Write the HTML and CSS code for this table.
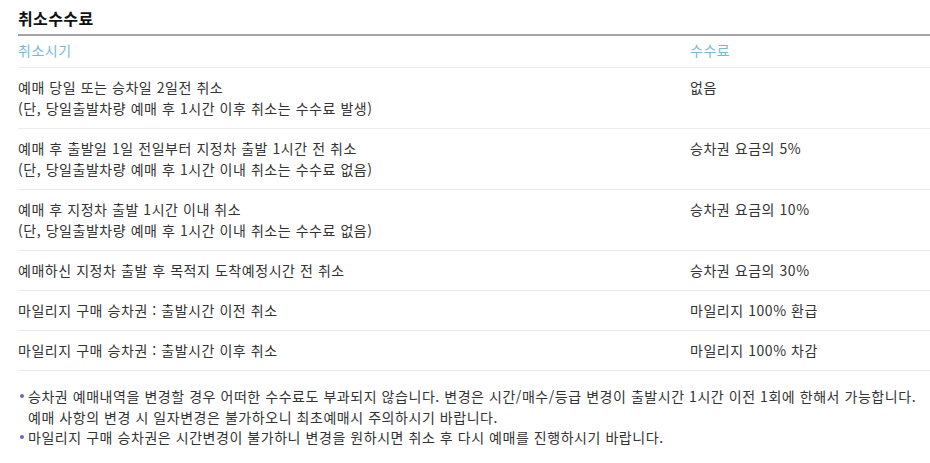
FILE: index.html
```html
<!DOCTYPE html>
<html lang="ko">
<head>
<meta charset="utf-8">
<link rel="stylesheet" href="styles.css">
</head>
<body>
<div class="wrap">
  <h2 class="title">취소수수료</h2>
  <div class="table">
    <div class="row head">
      <div class="c1">취소시기</div>
      <div class="c2">수수료</div>
    </div>
    <div class="row">
      <div class="c1">예매 당일 또는 승차일 2일전 취소<br>(단, 당일출발차량 예매 후 1시간 이후 취소는 수수료 발생)</div>
      <div class="c2">없음</div>
    </div>
    <div class="row">
      <div class="c1">예매 후 출발일 1일 전일부터 지정차 출발 1시간 전 취소<br>(단, 당일출발차량 예매 후 1시간 이내 취소는 수수료 없음)</div>
      <div class="c2">승차권 요금의 5%</div>
    </div>
    <div class="row">
      <div class="c1">예매 후 지정차 출발 1시간 이내 취소<br>(단, 당일출발차량 예매 후 1시간 이내 취소는 수수료 없음)</div>
      <div class="c2">승차권 요금의 10%</div>
    </div>
    <div class="row">
      <div class="c1">예매하신 지정차 출발 후 목적지 도착예정시간 전 취소</div>
      <div class="c2">승차권 요금의 30%</div>
    </div>
    <div class="row">
      <div class="c1">마일리지 구매 승차권 : 출발시간 이전 취소</div>
      <div class="c2">마일리지 100% 환급</div>
    </div>
    <div class="row">
      <div class="c1">마일리지 구매 승차권 : 출발시간 이후 취소</div>
      <div class="c2">마일리지 100% 차감</div>
    </div>
  </div>
  <ul class="notes">
    <li>승차권 예매내역을 변경할 경우 어떠한 수수료도 부과되지 않습니다. 변경은 시간/매수/등급 변경이 출발시간 1시간 이전 1회에 한해서 가능합니다.<br>예매 사항의 변경 시 일자변경은 불가하오니 최초예매시 주의하시기 바랍니다.</li>
    <li>마일리지 구매 승차권은 시간변경이 불가하니 변경을 원하시면 취소 후 다시 예매를 진행하시기 바랍니다.</li>
  </ul>
</div>
</body>
</html>
```
FILE: styles.css
```css
html, body {
  margin: 0;
  padding: 0;
  background: #fff;
}
body {
  font-family: "Noto Sans CJK KR", "Noto Sans", sans-serif;
  font-size: 14px;
  letter-spacing: 0.55px;
  color: #333;
}
.wrap {
  width: 912px;
  margin-left: 18px;
}
.title {
  margin: 0;
  padding: 6px 0 4px;
  font-size: 16px;
  line-height: 24px;
  font-weight: bold;
  letter-spacing: 0.4px;
  color: #111;
}
.table {
  border-top: 2px solid #a3a3aa;
}
.row {
  display: grid;
  grid-template-columns: 672px 1fr;
  padding: 9px 0;
  line-height: 21px;
  border-bottom: 1px solid #ececec;
}
.row.head {
  padding: 4px 0 6px;
  color: #7ab9d6;
}
.notes {
  list-style: none;
  margin: 15px 0 0;
  padding: 0;
  line-height: 20.5px;
}
.notes li {
  position: relative;
  padding-left: 10px;
}
.notes li::before {
  content: "";
  position: absolute;
  left: 2px;
  top: 8px;
  width: 4px;
  height: 4px;
  border-radius: 50%;
  background: #6a68c6;
}
```
